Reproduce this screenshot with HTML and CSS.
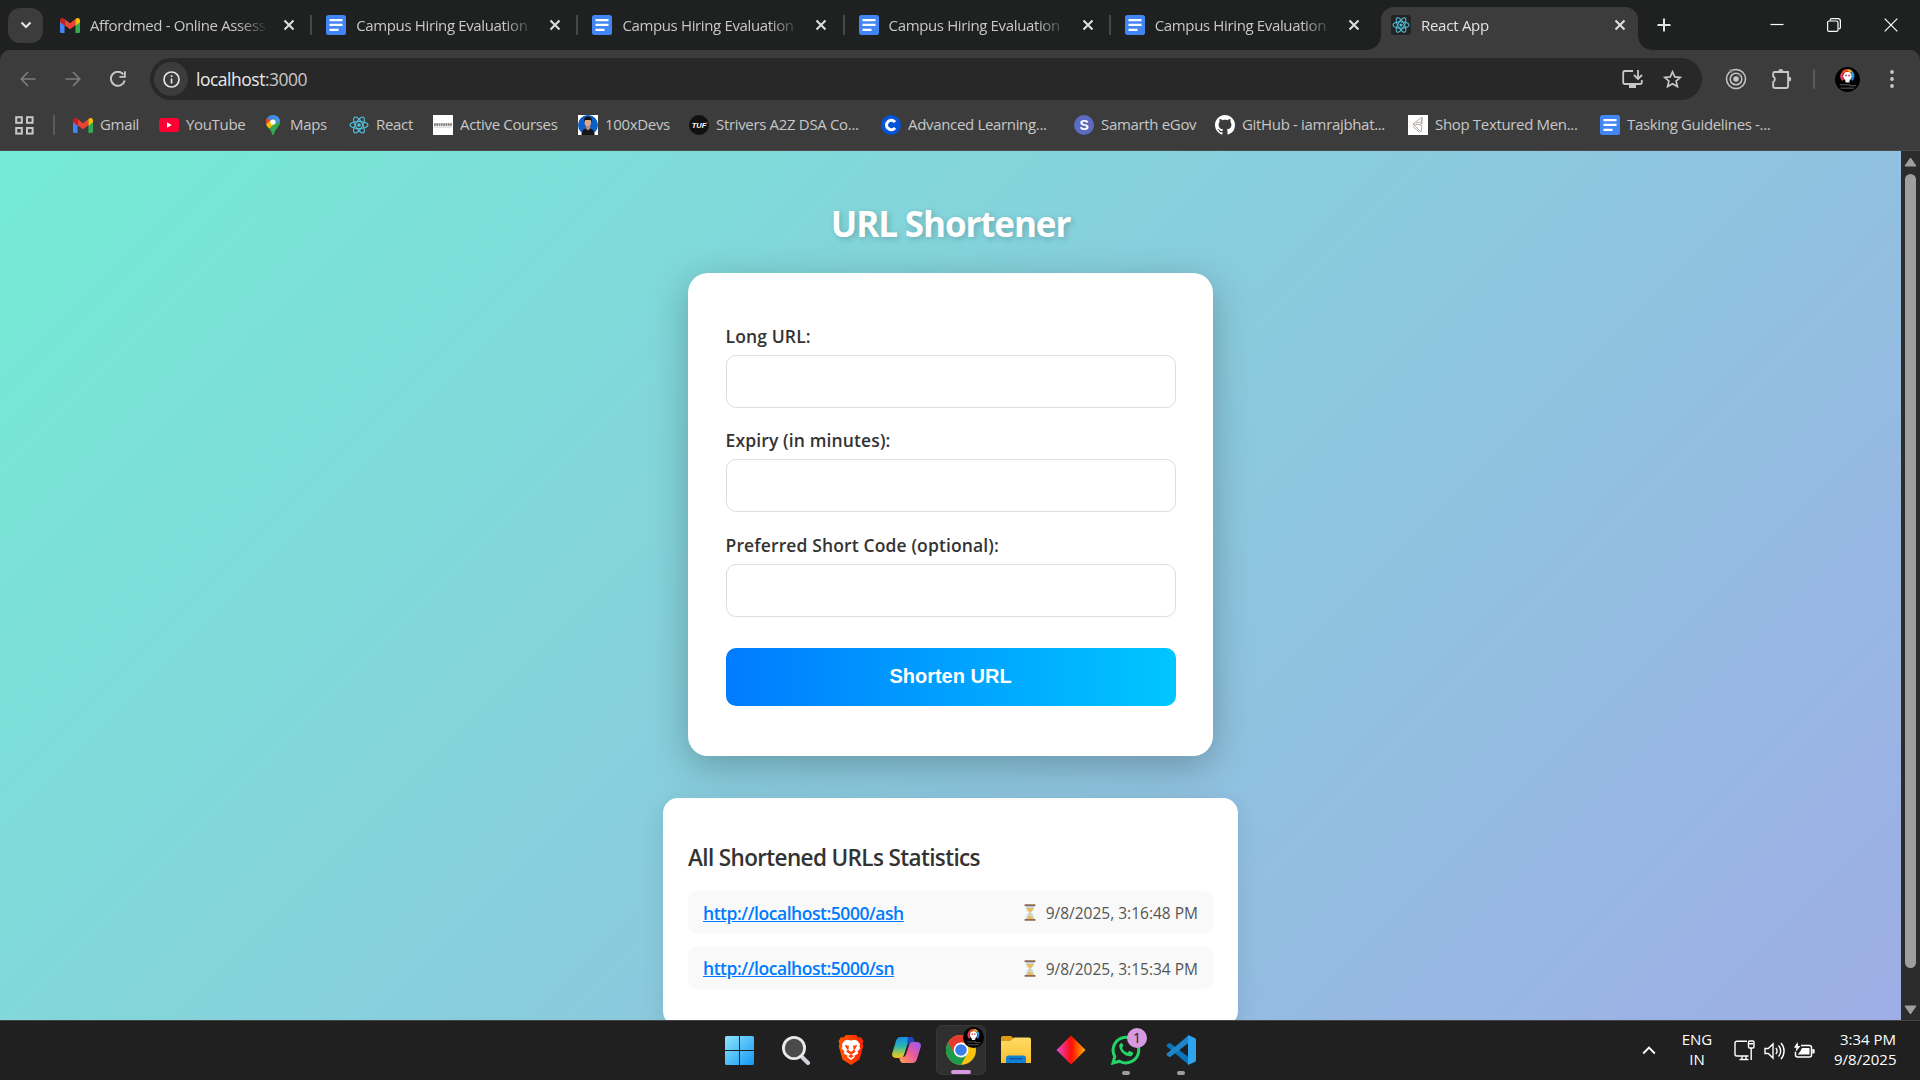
FILE: index.html
```html
<!DOCTYPE html>
<html lang="en">
<head>
<meta charset="utf-8">
<title>React App</title>
<link rel="stylesheet" href="styles.css">
</head>
<body>
<svg class="defs" aria-hidden="true">
  <defs>
    <linearGradient id="win" x1="0" y1="0" x2="1" y2="1"><stop offset="0" stop-color="#8fe4fd"/><stop offset="1" stop-color="#1499f2"/></linearGradient>
    <linearGradient id="brave" x1="0" y1="0" x2="1" y2="0"><stop offset="0" stop-color="#ff5601"/><stop offset=".5" stop-color="#ff4000"/><stop offset="1" stop-color="#ff1f01"/></linearGradient>
    <linearGradient id="copA" x1="0" y1="0" x2="0" y2="1"><stop offset="0" stop-color="#1a8ae8"/><stop offset=".45" stop-color="#2bb7b0"/><stop offset=".8" stop-color="#b6c93a"/><stop offset="1" stop-color="#f4c020"/></linearGradient>
    <linearGradient id="copB" x1="1" y1="0" x2="0" y2="1"><stop offset="0" stop-color="#8f59f7"/><stop offset=".5" stop-color="#ee5a9a"/><stop offset="1" stop-color="#ffa54a"/></linearGradient>
    <linearGradient id="fold" x1="0" y1="0" x2="0" y2="1"><stop offset="0" stop-color="#ffdc66"/><stop offset="1" stop-color="#fdbf2d"/></linearGradient>
    <linearGradient id="dia" x1="0" y1="0" x2="1" y2="0"><stop offset="0" stop-color="#e94bd8"/><stop offset=".48" stop-color="#fb0f12"/><stop offset=".55" stop-color="#ff1a00"/><stop offset="1" stop-color="#ffb400"/></linearGradient>
    <symbol id="gmail" viewBox="0 0 24 18"><path fill="#4285f4" d="M0 3v13.4C0 17.300.7 18 1.600 18H5.500V8z"/><path fill="#34a853" d="M18.500 18h3.900c.9 0 1.600-.7 1.600-1.600V3l-5.500 5z"/><path fill="#ea4335" d="M5.500 8.700V1.300L12 6.200l6.500-4.900v7.400L12 13.600z"/><path fill="#c5221f" d="M0 3v2.200l5.500 4V1.300L4.400.5C2.600-.8 0 .5 0 3z"/><path fill="#fbbc04" d="M24 3v2.200l-5.500 4V1.300l1.100-.8C21.400-.8 24 .5 24 3z"/></symbol>
    <symbol id="docs" viewBox="0 0 20 20"><rect width="20" height="20" rx="2.500" fill="#4285f4"/><path fill="#fff" d="M3.500 4h13v2.300h-13zM3.500 8.800h13v2.300h-13zM3.500 13.800h9v2.300h-9z"/></symbol>
    <symbol id="react" viewBox="0 0 20 20"><g fill="none" stroke="#53c1de" stroke-width="1.150"><ellipse cx="10" cy="10" rx="9" ry="3.500"/><ellipse cx="10" cy="10" rx="9" ry="3.500" transform="rotate(60 10 10)"/><ellipse cx="10" cy="10" rx="9" ry="3.500" transform="rotate(120 10 10)"/></g><circle cx="10" cy="10" r="1.800" fill="#53c1de"/></symbol>
    <symbol id="x" viewBox="0 0 12 12"><path d="M1.500 1.500l9 9M10.500 1.500l-9 9" fill="none" stroke="currentColor" stroke-width="2.100"/></symbol>
    <symbol id="hourglass" viewBox="0 0 12 18"><path fill="#c4dfee" d="M1.500 2h9c0 4-1.500 5.600-3.300 7 1.800 1.400 3.300 3 3.300 7h-9c0-4 1.500-5.600 3.300-7C3 7.600 1.500 6 1.500 2z"/><path fill="#f3b94f" d="M2.500 4.200h7C9 6.500 7.700 7.600 6.400 8.600v3.200l3 3.200v1h-6.800v-1l3-3.200V8.600C4.300 7.600 3 6.500 2.500 4.200z"/><path fill="#8b6a58" d="M.3.300h11.400v2H.3zM.3 15.800h11.400v2H.3z"/></symbol>
    <symbol id="avatar" viewBox="0 0 26 26"><circle cx="13" cy="13" r="13" fill="#000"/><circle cx="13" cy="9.500" r="4.500" fill="#fff"/><g fill="none" stroke-width="2.600"><path stroke="#e83b5b" d="M8.500 13.700A6 6 0 0 1 8 6.200"/><path stroke="#ef4a2b" d="M8 6.200A6 6 0 0 1 13 3.500"/><path stroke="#f5a02c" d="M13 3.500a6 6 0 0 1 4.500 2"/><path stroke="#27a2dd" d="M17.500 5.500a6 6 0 0 1 1.400 5"/><path stroke="#2a7be0" d="M18.900 10.500a6 6 0 0 1-1.600 3.200"/></g><path d="M10.500 8.800h2M13.700 8.800h2" stroke="#d23c4c" stroke-width="1.600"/><path d="M10.300 12.500h5.400l-.8 3.500h-3.800z" fill="#f2f2f2"/><path d="M5 18.500h11M15 19.500h7M6 22h14" stroke="#8d8d8d" stroke-width=".7"/></symbol>
  </defs>
</svg>

<header class="tabstrip">
  <button class="tab-search" aria-label="Search tabs"><svg width="12" height="8" viewBox="0 0 12 8"><path d="M1.500 1.500L6 6l4.500-4.500" fill="none" stroke="#e3e3e3" stroke-width="2.200"/></svg></button>
  <nav class="tabs">
    <div class="tab"><svg class="fav fav-gmail"><use href="#gmail"/></svg><span class="tab-title">Affordmed - Online Assess</span><svg class="tab-x"><use href="#x"/></svg></div>
    <div class="tab"><svg class="fav"><use href="#docs"/></svg><span class="tab-title">Campus Hiring Evaluation -</span><svg class="tab-x"><use href="#x"/></svg></div>
    <div class="tab"><svg class="fav"><use href="#docs"/></svg><span class="tab-title">Campus Hiring Evaluation -</span><svg class="tab-x"><use href="#x"/></svg></div>
    <div class="tab"><svg class="fav"><use href="#docs"/></svg><span class="tab-title">Campus Hiring Evaluation -</span><svg class="tab-x"><use href="#x"/></svg></div>
    <div class="tab"><svg class="fav"><use href="#docs"/></svg><span class="tab-title">Campus Hiring Evaluation -</span><svg class="tab-x"><use href="#x"/></svg></div>
    <div class="tab tab-active"><span class="fav fav-dark"><svg width="18" height="18"><use href="#react"/></svg></span><span class="tab-title">React App</span><svg class="tab-x"><use href="#x"/></svg></div>
  </nav>
  <button class="new-tab" aria-label="New tab"><svg width="14" height="14" viewBox="0 0 14 14"><path d="M7 .5v13M.5 7h13" stroke="#e3e3e3" stroke-width="2"/></svg></button>
  <div class="win-controls">
    <svg width="14" height="14" viewBox="0 0 14 14"><path d="M.5 6.500h13" stroke="#fff" stroke-width="1.200"/></svg>
    <svg width="14" height="14" viewBox="0 0 14 14" fill="none" stroke="#fff" stroke-width="1.200"><rect x=".6" y="3" width="10.400" height="10.400" rx="1.500"/><path d="M3.200 2.800V2.200C3.200 1.200 3.800.6 4.800.6h6c1.600 0 2.600 1 2.600 2.600v6c0 1-.6 1.600-1.600 1.600"/></svg>
    <svg width="14" height="14" viewBox="0 0 14 14"><path d="M.7.7l12.600 12.600M13.300.7L.7 13.300" stroke="#fff" stroke-width="1.200"/></svg>
  </div>
</header>

<div class="chrome">
  <div class="toolbar">
    <div class="nav-icons">
      <svg width="16" height="16" viewBox="0 0 16 16" fill="none" stroke="#7c7c7c" stroke-width="1.700"><path d="M15.500 8H1.500M8 1L1.300 8 8 15"/></svg>
      <svg width="16" height="16" viewBox="0 0 16 16" fill="none" stroke="#7c7c7c" stroke-width="1.700"><path d="M.5 8h14M8 1l6.700 7L8 15"/></svg>
      <svg width="16" height="16" viewBox="0 0 16 16"><path d="M14.700 9.500A7 7 0 1 1 13.300 3.300" fill="none" stroke="#c7c7c7" stroke-width="2"/><path d="M15.800.3v6.400H9.400V4.900H14V.3z" fill="#c7c7c7"/></svg>
    </div>
    <div class="omnibox">
      <span class="site-info"><svg width="17" height="17" viewBox="0 0 17 17"><circle cx="8.500" cy="8.500" r="7.500" fill="none" stroke="#e3e3e3" stroke-width="1.700"/><path d="M7.700 7.500h1.700v5H7.700zM7.700 4.300h1.700V6H7.700z" fill="#e3e3e3"/></svg></span>
      <span class="url">localhost<i>:3000</i></span>
      <svg class="install" width="21" height="18" viewBox="0 0 21 18" fill="none" stroke="#c7c7c7" stroke-width="1.800"><path d="M11 1H3Q1.200 1 1.200 2.800v9.400Q1.200 14 3 14h15q1.800 0 1.800-1.800V10"/><path d="M7 16.500h7" stroke-width="3"/><path d="M16 0v8M12 5l4 4 4-4"/></svg>
      <svg class="star" width="19" height="18" viewBox="0 0 19 18"><path d="M9.500 1.800l2.300 5.100 5.500.5-4.200 3.700 1.300 5.500-4.900-2.900-4.900 2.900 1.300-5.500L1.700 7.400l5.500-.5z" fill="none" stroke="#c7c7c7" stroke-width="1.700"/></svg>
    </div>
    <div class="ext-icons">
      <svg width="22" height="22" viewBox="0 0 22 22" fill="none" stroke="#c7c7c7" stroke-width="1.500"><circle cx="11" cy="11" r="9.500"/><circle cx="11" cy="11" r="5.800"/><circle cx="11" cy="11" r="2.800" fill="#c7c7c7" stroke="none"/><circle cx="6" cy="3" r="1.800" fill="#8b8b8b" stroke="none"/><circle cx="15" cy="7" r="1.500" fill="#8b8b8b" stroke="none"/></svg>
      <svg width="22" height="22" viewBox="0 0 22 22"><path d="M3.500 4h13.600v13.900Q17.100 20 15.200 20H4.200Q2.200 20 2.200 18.200V14a3.200 3.200 0 0 0 0-5.600V5.500Q2.200 4 3.500 4z" fill="none" stroke="#c7c7c7" stroke-width="1.900"/><path d="M7.300 3.500a2.500 2.500 0 0 1 5 0zM17.700 8.500a2.500 2.500 0 0 1 0 5z" fill="#c7c7c7"/></svg>
      <span class="bar"></span>
      <svg width="25" height="25"><use href="#avatar"/></svg>
      <svg width="4" height="18" viewBox="0 0 4 18" fill="#c7c7c7"><circle cx="2" cy="2" r="1.900"/><circle cx="2" cy="9" r="1.900"/><circle cx="2" cy="16" r="1.900"/></svg>
    </div>
  </div>
  <nav class="bookmarks">
    <svg width="19" height="19" viewBox="0 0 19 19" fill="none" stroke="#c7c7c7" stroke-width="2"><rect x="1.200" y="1.200" width="5.600" height="5.600"/><rect x="12" y="1.200" width="5.600" height="5.600"/><rect x="1.200" y="12" width="5.600" height="5.600"/><rect x="12" y="12" width="5.600" height="5.600"/></svg>
    <span class="bar"></span>
    <a><svg class="fav fav-gmail"><use href="#gmail"/></svg><span>Gmail</span></a>
    <a><svg class="fav" viewBox="0 0 20 20"><rect y="3" width="20" height="14" rx="3" fill="#ff0033"/><path d="M8 7.200v5.600l4.800-2.800z" fill="#fff"/></svg><span>YouTube</span></a>
    <a><svg class="fav" viewBox="0 0 20 20"><path d="M10 0C6 0 3 3 3 7c0 5 5 6.500 6 12.200.2 1 1.800 1 2 0C12 13.500 17 12 17 7c0-4-3-7-7-7z" fill="#34a853"/><path d="M3.300 9C2.600 6.500 3 4.300 4.700 2.400L8 5.200z" fill="#ea4335"/><path d="M4.700 2.400C7 0 11 -.5 13.500 1L8 7.200z" fill="#4285f4"/><path d="M3.300 9.200L8 5l3.500 4-5.400 4.400C4.800 12 3.700 10.800 3.300 9.200z" fill="#fbbc04"/><path d="M13 .7c2.300 1 3.800 3 4 5.300L12 9z" fill="#4b90f5"/><circle cx="10" cy="7" r="2.600" fill="#fff"/></svg><span>Maps</span></a>
    <a><svg class="fav"><use href="#react"/></svg><span>React</span></a>
    <a><svg class="fav" viewBox="0 0 20 20"><rect width="20" height="20" fill="#fff"/><path d="M1 9.500h18" stroke="#777" stroke-width="2.600" stroke-dasharray="1.800 .5"/><path d="M1 12h18" stroke="#bbb" stroke-width=".8"/></svg><span>Active Courses</span></a>
    <a><svg class="fav" viewBox="0 0 20 20"><rect width="20" height="20" fill="#fff"/><circle cx="10" cy="10" r="10" fill="#0b5fc7"/><path d="M3.500 20c0-4.500 2.500-6 5-6.800h3c3 .8 5 2.300 5 6.800z" fill="#151515"/><path d="M7.800 10h4.400v3.600L10 15.500l-2.200-1.900z" fill="#bd8a70"/><ellipse cx="9.800" cy="7" rx="3.300" ry="4.300" fill="#d5a78d"/><path d="M6.200 7.500C5.500 3.500 7 1.500 10 1.500s4.300 2 3.600 6L12.800 5H7z" fill="#17120f"/></svg><span>100xDevs</span></a>
    <a><svg class="fav" viewBox="0 0 20 20"><circle cx="10" cy="10" r="10" fill="#111"/><text x="10" y="12.600" class="tuf" text-anchor="middle">TUF</text><circle cx="18" cy="8" r=".8" fill="#e33"/></svg><span>Strivers A2Z DSA Co...</span></a>
    <a><svg class="fav" viewBox="0 0 20 20"><circle cx="10" cy="10" r="10" fill="#0553d6"/><path d="M14 7.200A4.700 4.700 0 1 0 14 12.800" fill="none" stroke="#fff" stroke-width="3"/></svg><span>Advanced Learning...</span></a>
    <a><svg class="fav" viewBox="0 0 20 20"><circle cx="10" cy="10" r="10" fill="#5c6bc0"/><text x="10" y="15" class="s-mark" text-anchor="middle">S</text></svg><span>Samarth eGov</span></a>
    <a><svg class="fav" viewBox="0 0 16 16"><path fill="#fff" d="M8 0C3.580 0 0 3.580 0 8c0 3.540 2.290 6.530 5.470 7.590.4.070.55-.17.55-.38 0-.19-.01-.82-.01-1.490-2.010.37-2.530-.49-2.690-.94-.09-.23-.48-.94-.82-1.130-.28-.15-.68-.52-.01-.53.63-.01 1.080.58 1.230.82.72 1.210 1.870.87 2.330.66.07-.52.28-.87.51-1.070-1.780-.2-3.640-.89-3.640-3.950 0-.87.310-1.590.82-2.150-.08-.2-.36-1.020.08-2.120 0 0 .67-.21 2.200.82.64-.18 1.320-.27 2-.27s1.360.09 2 .27c1.530-1.040 2.200-.82 2.200-.82.44 1.100.16 1.920.08 2.120.51.56.82 1.270.82 2.150 0 3.070-1.870 3.750-3.650 3.950.29.25.54.73.54 1.480 0 1.070-.01 1.930-.01 2.200 0 .21.150.46.55.38A8.010 8.010 0 0 0 16 8c0-4.420-3.580-8-8-8z"/></svg><span>GitHub - iamrajbhat...</span></a>
    <a><svg class="fav" viewBox="0 0 20 20"><rect width="20" height="20" fill="#fff"/><path d="M14 2L5 9l8 1zM5 9l8 8 1-7M4.500 11l7 6.500M14 3v6M8 8l5-1" fill="none" stroke="#b5aaa4" stroke-width="1"/></svg><span>Shop Textured Men...</span></a>
    <a><svg class="fav"><use href="#docs"/></svg><span>Tasking Guidelines -...</span></a>
  </nav>
</div>

<div class="viewport">
  <main class="page">
    <h1>URL Shortener</h1>
    <form class="card">
      <label>Long URL:</label><input type="text">
      <label>Expiry (in minutes):</label><input type="text">
      <label>Preferred Short Code (optional):</label><input type="text">
      <button type="button" class="submit">Shorten URL</button>
    </form>
    <section class="stats">
      <h2>All Shortened URLs Statistics</h2>
      <ul>
        <li><a class="short">http://localhost:5000/ash</a><span class="when"><svg width="12" height="17"><use href="#hourglass"/></svg><span>9/8/2025, 3:16:48 PM</span></span></li>
        <li><a class="short">http://localhost:5000/sn</a><span class="when when-last"><svg width="12" height="17"><use href="#hourglass"/></svg><span>9/8/2025, 3:15:34 PM</span></span></li>
      </ul>
    </section>
  </main>
  <aside class="scrollbar">
    <svg width="13" height="10" viewBox="0 0 13 10"><path d="M6.500 1L12 9H1z" fill="#9f9f9f" stroke="#9f9f9f" stroke-linejoin="round"/></svg>
    <span class="thumb"></span>
    <svg width="13" height="10" viewBox="0 0 13 10"><path d="M6.500 9L12 1H1z" fill="#9f9f9f" stroke="#9f9f9f" stroke-linejoin="round"/></svg>
  </aside>
</div>

<footer class="taskbar">
  <div class="apps">
    <span class="app app-start"><svg width="29" height="29" viewBox="0 0 29 29" fill="url(#win)"><path d="M0 1.500Q0 0 1.500 0H14v14H0zM15 0h12.500Q29 0 29 1.500V14H15zM0 15h14v14H1.500Q0 29 0 27.500zM15 15h14v12.500q0 1.500-1.500 1.500H15z"/></svg></span>
    <span class="app"><svg width="30" height="30" viewBox="0 0 30 30"><path d="M20 21l7 7" stroke="#cfd3d8" stroke-width="4" stroke-linecap="round"/><circle cx="13" cy="13" r="10.600" fill="#4b4b4b" stroke="#e8eaec" stroke-width="2.800"/></svg></span>
    <span class="app"><svg width="26" height="30" viewBox="0 0 26 30"><path d="M8 0h10l2.500 2.500 2.500-.3L25.500 6l-1 3 .8 2-3.800 13.500L13 30 4.500 24.500.7 11l.8-2-1-3L3 2.200l2.500.3z" fill="url(#brave)"/><path d="M13 5.500l3.500-.8 3 1 2.500 3.500-.5 2.500 1 1.500-3 3.300.8 2-4 2.300.7 1.200-4 3-4-3 .7-1.200-4-2.300.8-2-3-3.300 1-1.500L4 9.200l2.500-3.500 3-1z" fill="#fff"/><path d="M6.500 10l4.500.8-.7 4L13 17l2.700-2.200-.7-4 4.500-.8-3 5 1.200 1.800L13 19.800l-4.700-3L9.500 15zM10 21l3-1.500 3 1.500-3 2z" fill="#ff4000"/></svg></span>
    <span class="app"><svg width="29" height="26" viewBox="0 0 29 26"><path d="M9 0h9c2 0 2.600 1.300 3.300 3.500L22 6h-3.500c-2 0-3 1-3.600 3l-3 9c-.7 2-1.700 3-3.500 3H4c-3 0-4.500-2-3.700-5L4 4C4.800 1.400 6.300 0 9 0z" fill="url(#copA)"/><path d="M16 0h3c2 0 2.600 1.300 3.300 3.500L23 6h-4.500c-2 0-3 1-3.600 3z" fill="#1b49ba"/><path d="M20 26h-9c-2 0-2.600-1.300-3.300-3.500L7 20h3.500c2 0 3-1 3.600-3l3-9c.7-2 1.700-3 3.500-3H25c3 0 4.500 2 3.700 5L25 22c-.8 2.600-2.300 4-5 4z" fill="url(#copB)"/></svg></span>
    <span class="app app-active"><svg width="30" height="30" viewBox="0 0 30 30"><circle cx="15" cy="15" r="15" fill="#f9c30f"/><path d="M15 15L2 7.500A15 15 0 0 0 15 30l6.200-11.500z" fill="#1e9a4c"/><path d="M2 7.500A15 15 0 0 1 28 7.500H15L8.500 18.800z" fill="#e33b2e"/><circle cx="15" cy="15" r="7.400" fill="#fff"/><circle cx="15" cy="15" r="5.800" fill="#3b7ded"/></svg><svg class="app-avatar"><use href="#avatar"/></svg><i class="run run-wide"></i></span>
    <span class="app"><svg width="30" height="28" viewBox="0 0 30 28"><path d="M0 2Q0 0 2 0h7.500q1.500 0 2.500 1.800V6H0z" fill="#dd9a12"/><path d="M0 5h9.500L13 1.500h15Q30 1.500 30 3.500V27H0z" fill="url(#fold)"/><path d="M5 27v-5q0-2.500 2.500-2.500h15q2.500 0 2.500 2.500v5z" fill="#1280d6"/><path d="M8.500 22.800h13" stroke="#0b4f96" stroke-width="1.300"/></svg></span>
    <span class="app"><svg width="30" height="30" viewBox="0 0 30 30"><path d="M15 .5L29.500 15 15 29.500.5 15z" fill="url(#dia)"/></svg></span>
    <span class="app"><svg width="30" height="30" viewBox="0 0 30 30"><path d="M2 28l1.800-6.600A12.800 12.800 0 1 1 8.600 26.200z" fill="none" stroke="#25d366" stroke-width="3"/><path d="M10.500 8c-2 .7-2.700 2.500-2 4.700 1.200 4 4.500 7.300 8.700 8.400 2.400.6 4.200-.2 4.800-2.100.2-.7.200-1.100-.2-1.400l-2.900-1.500c-.5-.2-.8-.1-1.200.3l-1 1.300c-2.600-.8-4.500-2.500-5.700-5l1-1.300c.3-.4.300-.7.100-1.200l-1-2.200z" fill="#25d366"/></svg><b class="badge">1</b><i class="run"></i></span>
    <span class="app"><svg width="30" height="30" viewBox="0 0 30 30"><path d="M1 9.800l2-1.600q.7-.4 1.500.1L23 22.500V30L.900 11.500Q.2 10.500 1 9.800z" fill="#0a74bd"/><path d="M1 20.200l2 1.600q.7.400 1.500-.1L23 7.500V0L.9 18.500q-.7 1 .1 1.700z" fill="#2086cb"/><path d="M22 0l6.800 3q1.200.5 1.200 2v20q0 1.500-1.200 2L22 30z" fill="#2ea3ee"/></svg><i class="run"></i></span>
  </div>
  <div class="tray">
    <svg width="14" height="9" viewBox="0 0 14 9"><path d="M1.200 7.500L7 1.700l5.800 5.800" fill="none" stroke="#fff" stroke-width="1.900"/></svg>
    <span class="lang">ENG<br>IN</span>
    <svg width="21" height="21" viewBox="0 0 21 21" fill="none" stroke="#fff" stroke-width="1.400"><path d="M13 1.200H3Q1 1.200 1 3.200v11Q1 16 3 16h11.500M5.500 19.500h9M8 16v3.500M12 16v3.500"/><rect x="14.500" y="1" width="5.500" height="7" rx="1.200"/><path d="M15 3.700h4.500M17.200 8v12"/></svg>
    <svg width="21" height="20" viewBox="0 0 21 20" fill="none" stroke="#fff" stroke-width="1.400"><path d="M1 7.500h3.300L9 3v14l-4.700-4.500H1zM11.800 7a4.500 4.500 0 0 1 0 6M14.500 4.500a8 8 0 0 1 0 11M17 2a12 12 0 0 1 0 16"/></svg>
    <svg width="21" height="18" viewBox="0 0 21 18"><path d="M7 3.500h8.500q2 0 2 2v7.500q0 2-2 2H3.500q-2 0-2-2V10" fill="none" stroke="#fff" stroke-width="1.500"/><path d="M8 6h7.500v6.600H3.800L6.500 9z" fill="#fff"/><path d="M18.300 7h1.200q1.200 0 1.200 1.200v2q0 1.200-1.200 1.200h-1.200zM3.500 0L0 5.800h2.500L1.500 10 6.500 4H4z" fill="#fff"/></svg>
    <span class="clock">3:34 PM<br>9/8/2025</span>
  </div>
</footer>
</body>
</html>
```
FILE: styles.css
```css
* { box-sizing: border-box; }
body { margin: 0; width: 1920px; height: 1080px; overflow: hidden; display: flex; flex-direction: column; background: #202020; font-family: "Open Sans", "Noto Sans", sans-serif; color: #c7c7c7; }
button { border: 0; padding: 0; font: inherit; }
svg { display: block; flex: none; }
i { font-style: normal; }
.defs { position: absolute; width: 0; height: 0; }
.fav { width: 20px; height: 20px; flex: none; }
.fav-gmail { width: 20px; height: 15px; }

/* tab strip */
.tabstrip { height: 50px; flex: none; display: flex; align-items: center; background: #1f2120; padding-left: 8px; }
.tab-search { width: 35px; height: 35px; border-radius: 12px; background: #3c3c3c; display: grid; place-items: center; }
.tabs { display: flex; height: 50px; margin-left: 3px; }
.tab { width: 266.200px; display: flex; align-items: center; padding-left: 14px; background: linear-gradient(#474747, #474747) right 15px / 2px 20px no-repeat; }
.tab:nth-child(5) { background: none; }
.tab-title { width: 178px; margin-left: 10px; font-size: 15px; letter-spacing: -.36px; white-space: nowrap; -webkit-mask-image: linear-gradient(90deg, #000 148px, transparent 178px); mask-image: linear-gradient(90deg, #000 148px, transparent 178px); }
.tab-x { width: 12px; height: 12px; margin-left: 15px; color: #dedede; }
.tab-active { position: relative; height: 43px; margin: 7px 3px 0 4px; width: 257px; padding-left: 10px; padding-bottom: 7px; border-radius: 13px 13px 0 0; background: #3c3c3c; color: #e3e3e3; }
.tab-active .tab-title { letter-spacing: -.25px; }
.tab-active::before, .tab-active::after { content: ""; position: absolute; bottom: 0; width: 14px; height: 14px; }
.tab-active::before { left: -14px; background: radial-gradient(circle at 0 0, transparent 13.500px, #3c3c3c 14px); }
.tab-active::after { right: -14px; background: radial-gradient(circle at 100% 0, transparent 13.500px, #3c3c3c 14px); }
.fav-dark { background: #232323; border-radius: 3px; display: grid; place-items: center; }
.new-tab { background: none; margin-left: 16px; }
.win-controls { margin-left: auto; margin-right: 22px; display: flex; gap: 43px; }

/* toolbar */
.chrome { height: 101px; flex: none; background: #3c3c3c; border-radius: 10px 10px 0 0; border-bottom: 1px solid #4a4a4a; box-shadow: 0 -10px 0 #1f2120; }
.chrome { box-shadow: none; }
.toolbar { height: 58px; display: flex; align-items: center; padding-left: 20px; }
.nav-icons { display: flex; gap: 29px; width: 130px; }
.omnibox { width: 1552px; height: 42px; border-radius: 21px; background: #282828; display: flex; align-items: center; padding: 0 20px 0 4px; }
.site-info { width: 34px; height: 34px; border-radius: 50%; background: #3c3c3c; display: grid; place-items: center; }
.url { margin-left: 8px; font-size: 17.500px; letter-spacing: -.49px; color: #e8e8e8; }
.url i { color: #c7c7c7; }
.install { margin-left: auto; }
.star { margin-left: 20px; }
.ext-icons { display: flex; align-items: center; margin-left: 23px; flex: 1; }
.ext-icons > :nth-child(2) { margin-left: 24px; }
.ext-icons .bar { margin: 0 20px 0 20px; }
.ext-icons > :last-child { margin-left: 30px; }
.bar { width: 2px; height: 20px; background: #5b5b5b; border-radius: 1px; }
.bookmarks { height: 34px; display: grid; align-items: center; padding-left: 15px; grid-template-columns: 38px 20px 86px 104px 86px 84px 145px 111px 192px 193px 141px 193px 192px 180px; font-size: 15px; letter-spacing: -.33px; white-space: nowrap; }
.bookmarks a { display: flex; align-items: center; gap: 7px; }
.bookmarks a span { margin-top: -2px; }
.tuf { font: italic bold 7.500px "Liberation Sans", sans-serif; fill: #fff; letter-spacing: 0; }
.s-mark { font: bold 14px "Liberation Sans", sans-serif; fill: #fff; }

/* page */
.viewport { height: 869px; flex: none; display: flex; overflow: hidden; }
.page { width: 1901px; height: 914px; flex: none; display: flex; flex-direction: column; align-items: center; background: linear-gradient(135deg, #74ebd5, #9face6); color: #333; }
h1 { margin: 47px 0 0; height: 75px; font-size: 35px; line-height: 52px; font-weight: 700; letter-spacing: -1.100px; color: #fff; text-shadow: 2px 2px 6px rgba(0, 0, 0, .2); }
.card { width: 525px; height: 483px; padding: 50px 37.500px 0; border-radius: 20px; background: #fff; box-shadow: 0 10px 38px rgba(0, 0, 0, .25); display: flex; flex-direction: column; }
label { height: 32px; line-height: 27px; font-size: 17.500px; font-weight: 600; letter-spacing: .13px; }
input { height: 53px; flex: none; margin: 0 0 19.300px; border: 1px solid #ddd; border-radius: 10px; background: #fff; }
.submit { height: 58px; flex: none; margin-top: 12px; border-radius: 10px; background: linear-gradient(90deg, #007bff, #00c6ff); color: #fff; font: bold 20px "Liberation Sans", Arial, sans-serif; }
.stats { width: 575px; height: 228px; margin-top: 42px; padding: 43px 25px 0; border-radius: 15px; background: #fff; box-shadow: 0 6px 25px rgba(0, 0, 0, .1); }
h2 { margin: 0; height: 50px; line-height: 34px; font-size: 22.500px; font-weight: 600; letter-spacing: -.63px; }
ul { list-style: none; margin: 0; padding: 0; display: grid; gap: 12px; }
li { height: 43px; padding: 0 15px; border-radius: 10px; background: #f9f9f9; display: flex; align-items: center; justify-content: space-between; }
.short { font-size: 17.500px; font-weight: 600; letter-spacing: -.46px; color: #007bff; text-decoration: underline; }
.when { display: flex; align-items: center; gap: 10px; font-size: 15.500px; color: #555; }
.when-last { padding-top: 2px; }
.scrollbar { width: 19px; flex: none; background: #2c2c2c; display: flex; flex-direction: column; align-items: center; padding: 6px 0 5px; }
.thumb { width: 11px; height: 794px; margin: 7px 0 auto; border-radius: 6px; background: #9f9f9f; }

/* taskbar */
.taskbar { height: 60px; flex: none; display: flex; background: #202020; border-top: 1px solid #444; color: #fff; }
.apps { display: flex; align-items: center; gap: 5px; margin-left: 714px; padding-bottom: 1px; }
.app { position: relative; width: 50px; height: 50px; display: grid; place-items: center; border-radius: 6px; }
.app-start { margin-right: 2px; }
.app-active { background: #2f2f2f; border: 1px solid #383838; }
.app-avatar { position: absolute; right: 1px; top: 1px; width: 21px; height: 21px; }
.run { position: absolute; left: 21px; bottom: 0; width: 8px; height: 4px; border-radius: 2px; background: #9d9d9d; }
.run-wide { left: 14px; width: 20px; background: #d79ae0; }
.badge { position: absolute; right: 4px; top: 3px; width: 20px; height: 20px; border-radius: 50%; background: #d79ae0; color: #1b1b1b; font-size: 14px; font-weight: 400; line-height: 20px; text-align: center; }
.tray { margin-left: auto; display: flex; align-items: center; padding-right: 24px; font-size: 15px; line-height: 20px; }
.lang { width: 46px; margin: -3px 14px 0 18px; text-align: center; }
.tray svg + svg { margin-left: 9px; }
.clock { margin: -4px 0 0 19px; text-align: right; width: 62px; white-space: nowrap; }
```
